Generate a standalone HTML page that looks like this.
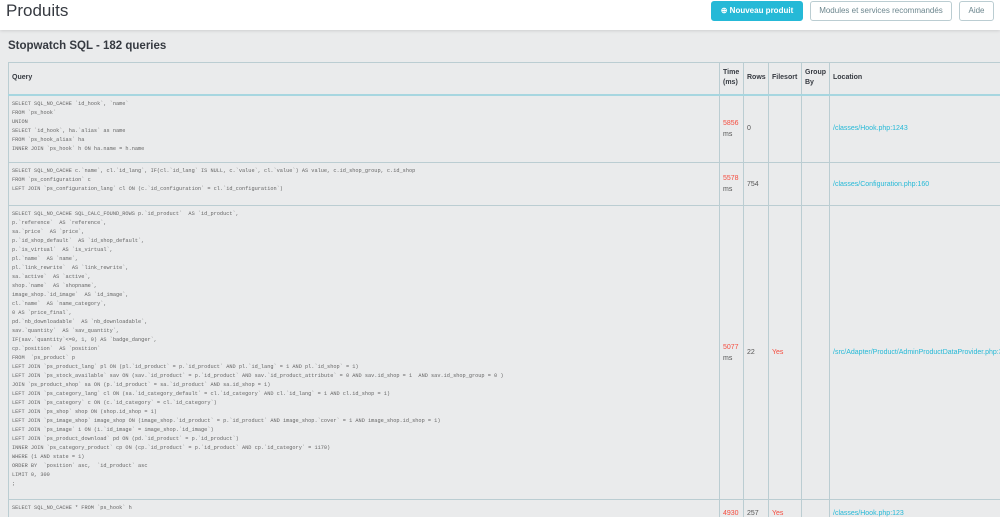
<!DOCTYPE html>
<html><head><meta charset="utf-8"><style>
*{margin:0;padding:0;box-sizing:border-box}
html,body{width:1000px;height:517px;overflow:hidden}
body{background:#eaebec;font-family:"Liberation Sans",sans-serif;position:relative}
.hdr{position:absolute;left:0;top:0;width:1000px;height:30px;background:#fff;box-shadow:0 1px 3px rgba(0,0,0,.12);z-index:2}
.hdr h1{position:absolute;left:6px;top:1px;font-weight:normal;font-size:17px;color:#363a41}
.btn{position:absolute;top:1px;height:20px;font-size:8px;line-height:18px;text-align:center;border:1px solid #bbcdd2;border-radius:3px;color:#6c868e;background:#fff}
.b1{left:711px;width:92px;background:#25b9d7;border-color:#25b9d7;color:#fff;font-weight:bold}
.b2{left:810px;width:142px}
.b3{left:959px;width:35px}
h2{position:absolute;left:8px;top:40px;font-size:11.5px;color:#363a41}
table{position:absolute;left:8px;top:62px;width:1010px;border-collapse:collapse;border-left:1px solid #bbcdd2;table-layout:fixed}
th{font-size:7px;text-align:left;color:#363a41;padding:0 3px;height:32px;border-top:1px solid #bbcdd2;border-right:1px solid #bbcdd2;border-bottom:2px solid #a7d6e0;vertical-align:middle;line-height:10px}
td{font-size:7px;color:#555;padding:0 3px;border-right:1px solid #bbcdd2;border-bottom:1px solid #bbcdd2;vertical-align:middle;white-space:nowrap;overflow:visible}
td.q{font-family:"Liberation Mono",monospace;font-size:5.25px;line-height:9px;white-space:pre;color:#666;vertical-align:top;padding:4px 3px 0 3px;overflow:hidden}
.r{color:#f54c3e}
.l{color:#25b9d7}
.t{line-height:11px}
</style></head><body>
<div class="hdr"><h1>Produits</h1>
<div class="btn b1">⊕ Nouveau produit</div>
<div class="btn b2">Modules et services recommandés</div>
<div class="btn b3">Aide</div></div>
<h2>Stopwatch SQL - 182 queries</h2>
<table>
<colgroup><col style="width:711px"><col style="width:24px"><col style="width:25px"><col style="width:33px"><col style="width:28px"><col style="width:189px"></colgroup>
<tr><th>Query</th><th>Time (ms)</th><th>Rows</th><th>Filesort</th><th>Group By</th><th>Location</th></tr>
<tr style="height:68px"><td class="q">SELECT SQL_NO_CACHE `id_hook`, `name`
FROM `ps_hook`
UNION
SELECT `id_hook`, ha.`alias` as name
FROM `ps_hook_alias` ha
INNER JOIN `ps_hook` h ON ha.name = h.name</td><td class="t"><span class="r">5856</span><br>ms</td><td>0</td><td></td><td></td><td class="l">/classes/Hook.php:1243</td></tr>
<tr style="height:43px"><td class="q">SELECT SQL_NO_CACHE c.`name`, cl.`id_lang`, IF(cl.`id_lang` IS NULL, c.`value`, cl.`value`) AS value, c.id_shop_group, c.id_shop
FROM `ps_configuration` c
LEFT JOIN `ps_configuration_lang` cl ON (c.`id_configuration` = cl.`id_configuration`)</td><td class="t"><span class="r">5578</span><br>ms</td><td>754</td><td></td><td></td><td class="l">/classes/Configuration.php:160</td></tr>
<tr style="height:294px"><td class="q">SELECT SQL_NO_CACHE SQL_CALC_FOUND_ROWS p.`id_product`  AS `id_product`,
p.`reference`  AS `reference`,
sa.`price`  AS `price`,
p.`id_shop_default`  AS `id_shop_default`,
p.`is_virtual`  AS `is_virtual`,
pl.`name`  AS `name`,
pl.`link_rewrite`  AS `link_rewrite`,
sa.`active`  AS `active`,
shop.`name`  AS `shopname`,
image_shop.`id_image`  AS `id_image`,
cl.`name`  AS `name_category`,
0 AS `price_final`,
pd.`nb_downloadable`  AS `nb_downloadable`,
sav.`quantity`  AS `sav_quantity`,
IF(sav.`quantity`<=0, 1, 0) AS `badge_danger`,
cp.`position`  AS `position`
FROM  `ps_product` p
LEFT JOIN `ps_product_lang` pl ON (pl.`id_product` = p.`id_product` AND pl.`id_lang` = 1 AND pl.`id_shop` = 1)
LEFT JOIN `ps_stock_available` sav ON (sav.`id_product` = p.`id_product` AND sav.`id_product_attribute` = 0 AND sav.id_shop = 1  AND sav.id_shop_group = 0 )
JOIN `ps_product_shop` sa ON (p.`id_product` = sa.`id_product` AND sa.id_shop = 1)
LEFT JOIN `ps_category_lang` cl ON (sa.`id_category_default` = cl.`id_category` AND cl.`id_lang` = 1 AND cl.id_shop = 1)
LEFT JOIN `ps_category` c ON (c.`id_category` = cl.`id_category`)
LEFT JOIN `ps_shop` shop ON (shop.id_shop = 1)
LEFT JOIN `ps_image_shop` image_shop ON (image_shop.`id_product` = p.`id_product` AND image_shop.`cover` = 1 AND image_shop.id_shop = 1)
LEFT JOIN `ps_image` i ON (i.`id_image` = image_shop.`id_image`)
LEFT JOIN `ps_product_download` pd ON (pd.`id_product` = p.`id_product`)
INNER JOIN `ps_category_product` cp ON (cp.`id_product` = p.`id_product` AND cp.`id_category` = 1170)
WHERE (1 AND state = 1)
ORDER BY  `position` asc,  `id_product` asc
LIMIT 0, 300
;</td><td class="t"><span class="r">5077</span><br>ms</td><td>22</td><td class="r">Yes</td><td></td><td class="l">/src/Adapter/Product/AdminProductDataProvider.php:321</td></tr>
<tr style="height:17px"><td class="q" style="height:17px">SELECT SQL_NO_CACHE * FROM `ps_hook` h</td><td class="t" style="vertical-align:top;padding-top:8px"><span class="r">4930</span></td><td style="vertical-align:top;padding-top:10px">257</td><td class="r" style="vertical-align:top;padding-top:10px">Yes</td><td></td><td class="l" style="vertical-align:top;padding-top:10px">/classes/Hook.php:123</td></tr>
</table>
</body></html>
